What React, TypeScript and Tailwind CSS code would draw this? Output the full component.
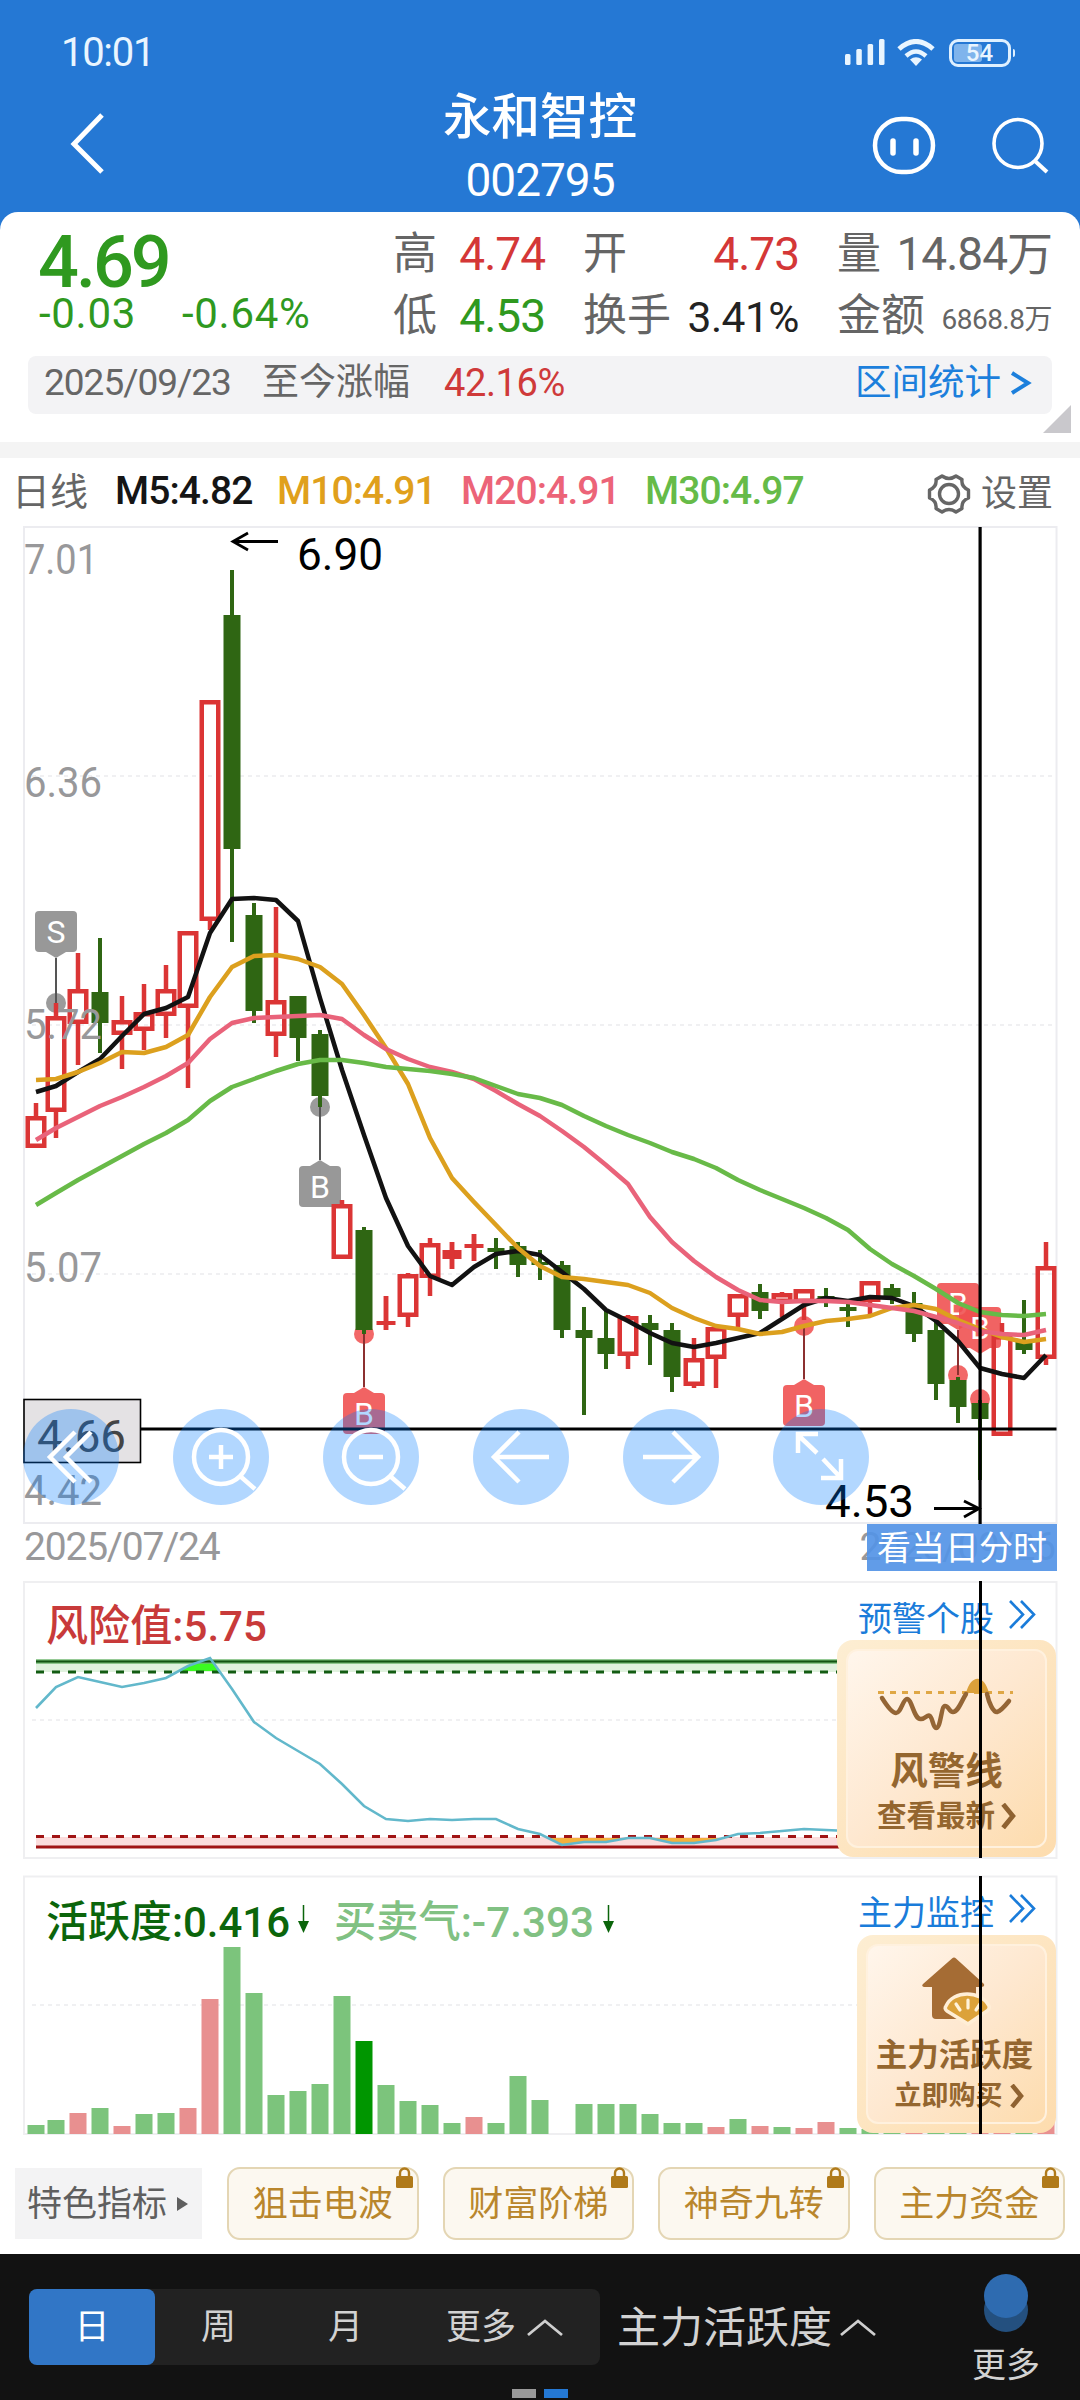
import React from "react";

type Candle = [number, number, number, number, "r" | "g"];

// high, body top, body bottom, low, direction
const CANDLES: Candle[] = [
  [1103, 1116, 1148, 1148, "r"],
  [1003, 1016, 1112, 1138, "r"],
  [953, 989, 1024, 1065, "r"],
  [938, 992, 1023, 1053, "g"],
  [996, 1020, 1035, 1069, "r"],
  [984, 1012, 1031, 1050, "r"],
  [965, 989, 1016, 1038, "r"],
  [931, 931, 1008, 1088, "r"],
  [700, 700, 921, 930, "r"],
  [570, 615, 849, 942, "g"],
  [903, 915, 1011, 1023, "g"],
  [907, 1000, 1036, 1057, "r"],
  [996, 996, 1038, 1061, "g"],
  [1030, 1034, 1096, 1107, "g"],
  [1200, 1204, 1259, 1259, "r"],
  [1227, 1230, 1330, 1334, "g"],
  [1296, 1321, 1325, 1330, "r"],
  [1273, 1274, 1317, 1327, "r"],
  [1238, 1243, 1278, 1296, "r"],
  [1242, 1250, 1259, 1269, "r"],
  [1234, 1244, 1248, 1261, "r"],
  [1238, 1248, 1252, 1269, "g"],
  [1242, 1246, 1265, 1277, "g"],
  [1250, 1262, 1265, 1280, "g"],
  [1261, 1265, 1330, 1338, "g"],
  [1307, 1330, 1338, 1415, "g"],
  [1310, 1338, 1354, 1369, "g"],
  [1315, 1316, 1356, 1369, "r"],
  [1315, 1323, 1330, 1365, "g"],
  [1323, 1330, 1377, 1392, "g"],
  [1338, 1358, 1386, 1388, "r"],
  [1327, 1327, 1359, 1388, "r"],
  [1294, 1294, 1317, 1327, "r"],
  [1284, 1292, 1311, 1319, "g"],
  [1292, 1293, 1303, 1317, "r"],
  [1289, 1289, 1303, 1320, "r"],
  [1288, 1296, 1299, 1307, "g"],
  [1303, 1307, 1311, 1327, "g"],
  [1281, 1281, 1302, 1314, "r"],
  [1284, 1288, 1297, 1304, "g"],
  [1292, 1303, 1334, 1342, "g"],
  [1320, 1330, 1384, 1400, "g"],
  [1377, 1380, 1407, 1423, "g"],
  [1400, 1403, 1419, 1480, "g"],
  [1323, 1335, 1436, 1436, "r"],
  [1300, 1340, 1350, 1354, "g"],
  [1242, 1266, 1359, 1365, "r"],
];

const MA5 = [1092, 1086, 1072, 1059, 1036, 1014, 1008, 997, 933, 899, 898, 900, 921, 998, 1070, 1135, 1198, 1246, 1276, 1285, 1267, 1254, 1251, 1255, 1272, 1289, 1310, 1321, 1333, 1343, 1347, 1343, 1338, 1333, 1319, 1305, 1298, 1301, 1297, 1298, 1306, 1321, 1341, 1368, 1374, 1378, 1355];
const MA10 = [1080, 1079, 1072, 1063, 1052, 1053, 1047, 1035, 997, 967, 956, 955, 959, 967, 984, 1015, 1048, 1084, 1138, 1178, 1202, 1225, 1248, 1266, 1277, 1279, 1282, 1285, 1293, 1308, 1318, 1326, 1329, 1334, 1332, 1326, 1321, 1319, 1316, 1308, 1305, 1309, 1320, 1329, 1337, 1342, 1339];
const MA20 = [1140, 1128, 1117, 1106, 1097, 1087, 1076, 1063, 1039, 1023, 1018, 1017, 1016, 1015, 1019, 1035, 1049, 1059, 1067, 1072, 1079, 1091, 1104, 1116, 1131, 1147, 1165, 1184, 1217, 1242, 1261, 1277, 1290, 1300, 1302, 1301, 1301, 1302, 1305, 1308, 1311, 1317, 1323, 1331, 1334, 1335, 1330];
const MA30 = [1205, 1193, 1180, 1168, 1156, 1144, 1133, 1120, 1101, 1087, 1079, 1071, 1064, 1060, 1060, 1063, 1067, 1069, 1071, 1074, 1078, 1086, 1094, 1098, 1105, 1116, 1126, 1135, 1143, 1152, 1159, 1168, 1180, 1190, 1199, 1208, 1218, 1230, 1249, 1264, 1276, 1289, 1303, 1312, 1315, 1316, 1314];

const RISK = [1708, 1687, 1677, 1682, 1687, 1683, 1678, 1666, 1658, 1689, 1722, 1738, 1751, 1764, 1784, 1806, 1819, 1821, 1819, 1820, 1819, 1819, 1829, 1834, 1845, 1842, 1842, 1838, 1838, 1843, 1843, 1840, 1834, 1833, 1831, 1829, 1830, 1831];

const BARS: [number, string][] = [
  [2125, "g"], [2120, "g"], [2113, "r"], [2108, "g"], [2126, "r"], [2114, "g"], [2113, "g"], [2108, "r"],
  [1999, "r"], [1947, "g"], [1993, "g"], [2095, "g"], [2091, "g"], [2084, "g"], [1996, "g"], [2041, "d"],
  [2085, "g"], [2101, "g"], [2105, "g"], [2123, "g"], [2117, "r"], [2123, "g"], [2076, "g"], [2100, "g"],
  [2134, "g"], [2104, "g"], [2104, "g"], [2104, "g"], [2114, "g"], [2123, "g"], [2123, "g"], [2127, "r"],
  [2119, "g"], [2126, "r"], [2127, "g"], [2128, "r"], [2122, "r"], [2128, "g"], [2129, "g"], [2129, "g"],
  [2129, "r"], [2129, "g"], [2129, "g"], [2129, "r"], [2129, "r"], [2129, "g"], [2122, "r"],
];

const BAR_FILL: Record<string, string> = { g: "#7cc47c", r: "#e89090", d: "#009600" };

const xAt = (i: number) => (i === 0 ? 36 : 34 + 22 * i);
const toPoints = (ys: number[]) => ys.map((y, i) => `${xAt(i)},${y}`).join(" ");

interface SignalProps {
  x: number;
  dotY: number;
  boxY: number;
  label: string;
  color: string;
  line: string;
}

const SIGNALS: SignalProps[] = [
  { x: 56, dotY: 1003, boxY: 911, label: "S", color: "#8a8a8a", line: "#555" },
  { x: 320, dotY: 1107, boxY: 1166, label: "B", color: "#8a8a8a", line: "#555" },
  { x: 364, dotY: 1334, boxY: 1393, label: "B", color: "#f04e4e", line: "#8c3030" },
  { x: 804, dotY: 1326, boxY: 1385, label: "B", color: "#f04e4e", line: "#8c3030" },
  { x: 958, dotY: 1375, boxY: 1283, label: "B", color: "#f04e4e", line: "#8c3030" },
  { x: 980, dotY: 1399, boxY: 1307, label: "B", color: "#f04e4e", line: "#8c3030" },
];

function Signal({ x, dotY, boxY, label, color, line }: SignalProps) {
  const above = boxY < dotY;
  const tip = above ? boxY + 47 : boxY - 6;
  const base = above ? boxY + 41 : boxY;
  return (
    <g>
      <circle cx={x} cy={dotY} r="10" fill={color} fillOpacity="0.85" />
      <line x1={x} x2={x} y1={tip} y2={dotY} stroke={line} strokeWidth="2" />
      <g opacity="0.88">
        <rect x={x - 21} y={boxY} width="42" height="41" rx="4" fill={color} />
        <path d={`M${x - 10} ${base} L${x} ${tip} L${x + 10} ${base} Z`} fill={color} />
      </g>
      <text x={x} y={boxY + 32} fontSize="32" textAnchor="middle" fill="#fff">
        {label}
      </text>
    </g>
  );
}

function PriceLabel({ x = 24, y, w = 78, size = 43, fill = "#98989a", children }: { x?: number; y: number; w?: number; size?: number; fill?: string; children: string }) {
  return (
    <text x={x} y={y} fontSize={size} fill={fill} textLength={w} lengthAdjust="spacingAndGlyphs">
      {children}
    </text>
  );
}

function KLine() {
  return (
    <svg className="block overflow-visible" width="1080" height="998" viewBox="0 526 1080 998">
      <rect x="24" y="527" width="1032.5" height="996" fill="none" stroke="#ececf0" strokeWidth="2" />
      {[776, 1025, 1274].map((y) => (
        <line key={y} x1="32" x2="1056" y1={y} y2={y} stroke="#f0f0f2" strokeWidth="2" strokeDasharray="4 4" />
      ))}

      {SIGNALS.map((s, i) => (
        <Signal key={i} {...s} />
      ))}

      {CANDLES.map(([high, top, bottom, low, dir], i) => {
        const x = xAt(i);
        if (dir === "g") {
          return (
            <g key={i} fill="#2f6613">
              <rect x={x - 2} y={high} width="4" height={low - high} />
              <rect x={x - 8.5} y={top} width="17" height={bottom - top} />
            </g>
          );
        }
        return (
          <g key={i} fill="#db3535">
            <rect x={x - 2.25} y={high} width="4.5" height={top - high} />
            <rect x={x - 2.25} y={bottom} width="4.5" height={low - bottom} />
            {bottom - top < 10 ? (
              <>
                <rect x={x - 9.5} y={top} width="19" height={bottom - top} />
                <rect x={x - 2.25} y={high} width="4.5" height={low - high} />
              </>
            ) : (
              <rect x={x - 8.25} y={top + 2.25} width="16.5" height={bottom - top - 4.5} fill="none" stroke="#db3535" strokeWidth="4.5" />
            )}
          </g>
        );
      })}

      <PriceLabel y={574} w={74}>7.01</PriceLabel>
      <PriceLabel y={797}>6.36</PriceLabel>
      <PriceLabel y={1039}>5.72</PriceLabel>
      <PriceLabel y={1282}>5.07</PriceLabel>
      <PriceLabel y={1505}>4.42</PriceLabel>

      <g fill="none" strokeWidth="4.5" strokeLinejoin="round">
        <polyline points={toPoints(MA5)} stroke="#121212" />
        <polyline points={toPoints(MA10)} stroke="#dca01e" />
        <polyline points={toPoints(MA20)} stroke="#e9637a" />
        <polyline points={toPoints(MA30)} stroke="#68ba48" />
      </g>

      {/* extremes */}
      <g fill="none" stroke="#000" strokeWidth="2.8">
        <path d="M278 541.5 H233 M248 533 L233 541.5 L248 550" />
        <path d="M934 1508.5 H979 M964 1501 L979 1508.5 L964 1517" />
      </g>
      <PriceLabel x={297} y={570} w={86} size={45} fill="#000">6.90</PriceLabel>
      <PriceLabel x={825} y={1517} w={89} size={45} fill="#000">4.53</PriceLabel>

      {/* crosshair */}
      <rect x="140" y="1427.5" width="916.5" height="3" fill="#000" />
      <rect x="978.5" y="527" width="3.2" height="997" fill="#000" />
      <rect x="24" y="1399.5" width="116.5" height="63" fill="#e4e2e4" stroke="#000" strokeWidth="1.6" />
      <PriceLabel x={37} y={1452} w={89} size={45} fill="#444">4.66</PriceLabel>
    </svg>
  );
}

const TOOL_ICONS = [
  <path key="back" d="M52 23 L27 48 L52 73 M68 23 L43 48 L68 73" />,
  <g key="in">
    <circle cx="48" cy="48" r="27" />
    <path d="M36 48 H60 M48 36 V60 M67 67 L82 80" />
  </g>,
  <g key="out">
    <circle cx="48" cy="48" r="27" />
    <path d="M36 48 H60 M67 67 L82 80" />
  </g>,
  <path key="left" d="M76 48 H22 M46 23 L21 48 L46 73" />,
  <path key="right" d="M20 48 H74 M50 23 L75 48 L50 73" />,
  <path key="full" d="M44 44 L25 26 M25 44 V25 H45 M50 50 L68 69 M48 69 H68 V50" />,
];

function ChartTools() {
  return (
    <div className="absolute left-[23px] top-[883px] flex gap-[54px]">
      {TOOL_ICONS.map((icon, i) => (
        <div key={i} className="h-24 w-24 rounded-full bg-[rgba(0,122,255,0.3)]">
          <svg width="96" height="96" viewBox="0 0 96 96" fill="none" stroke="#fff" strokeWidth="4.5">
            {icon}
          </svg>
        </div>
      ))}
    </div>
  );
}

function RiskChart() {
  const pts = toPoints(RISK);
  return (
    <svg className="block" width="1080" height="278" viewBox="0 1581 1080 278">
      <defs>
        <clipPath id="hi"><rect x="0" y="1662" width="840" height="9" /></clipPath>
        <clipPath id="lo"><rect x="0" y="1838" width="840" height="10" /></clipPath>
      </defs>
      <rect x="24" y="1582" width="1032.5" height="276" fill="none" stroke="#efeff1" strokeWidth="2" />
      <line x1="32" x2="850" y1="1720" y2="1720" stroke="#f0f0f2" strokeWidth="2" strokeDasharray="4 4" />
      <rect x="36" y="1662" width="814" height="10" fill="#e0f2de" />
      <rect x="36" y="1837" width="814" height="10" fill="#fbdcdc" />
      <polygon points={`36,1700 ${pts} 848,1700`} fill="#3bfb22" clipPath="url(#hi)" />
      <polygon points={`36,1800 ${pts} 848,1800`} fill="#f3b13c" clipPath="url(#lo)" />
      <line x1="36" x2="850" y1="1661.5" y2="1661.5" stroke="#73b873" strokeWidth="4.5" />
      <line x1="36" x2="850" y1="1661.5" y2="1661.5" stroke="#135413" strokeWidth="2" />
      <line x1="36" x2="850" y1="1672" y2="1672" stroke="#125c12" strokeWidth="3" strokeDasharray="8 8" />
      <line x1="36" x2="850" y1="1836.5" y2="1836.5" stroke="#a01414" strokeWidth="3" strokeDasharray="8 8" />
      <line x1="36" x2="850" y1="1847" y2="1847" stroke="#a01414" strokeWidth="3" />
      <polyline points={pts} fill="none" stroke="#62b8cb" strokeWidth="2.6" />
      <text x="46" y="1641" fontSize="43" fontWeight="500" fill="#c83a3a" textLength="221" lengthAdjust="spacingAndGlyphs">
        风险值:5.75
      </text>
    </svg>
  );
}

function ActivityChart() {
  return (
    <svg className="block" width="1080" height="260" viewBox="0 1875 1080 260">
      <rect x="24" y="1876.5" width="1032.5" height="257.5" fill="none" stroke="#efeff1" strokeWidth="2" />
      <line x1="32" x2="1056" y1="2005" y2="2005" stroke="#f0f0f2" strokeWidth="2" strokeDasharray="4 4" />
      {BARS.map(([top, kind], i) => (
        <rect key={i} x={xAt(i) - 8.5} y={top} width="17" height={2134 - top} fill={BAR_FILL[kind]} />
      ))}
      <text x="46" y="1937" fontSize="43" fontWeight="500" fill="#0b650b" textLength="244" lengthAdjust="spacingAndGlyphs">
        活跃度:0.416
      </text>
      <text x="334" y="1937" fontSize="43" fontWeight="500" fill="#81c183" textLength="260" lengthAdjust="spacingAndGlyphs">
        买卖气:-7.393
      </text>
      {[303.5, 608.5].map((x) => (
        <g key={x} fill="#0b650b">
          <rect x={x - 0.75} y="1905" width="1.5" height="18" />
          <path d={`M${x - 5.5} 1921 H${x + 5.5} L${x} 1933 Z`} />
        </g>
      ))}
    </svg>
  );
}

function PanelLink({ children }: { children: string }) {
  return (
    <div className="absolute left-[858px] top-[18px] flex items-center gap-[15px] text-[34px] leading-[40px] text-[#1a7cda]">
      <span>{children}</span>
      <svg width="27" height="30" viewBox="0 0 27 30" fill="none" stroke="#1a7cda" strokeWidth="2.6" className="-mt-2">
        <path d="M1 1 L14 14.5 L1 28 M12 1 L25 14.5 L12 28" />
      </svg>
    </div>
  );
}

function MoreChevron({ size }: { size: string }) {
  return (
    <svg className={size} viewBox="0 0 14 24" fill="none" stroke="#8f6231" strokeWidth="4.5">
      <path d="M2 1 L11 12 L2 23" />
    </svg>
  );
}

function StatusBar() {
  return (
    <div className="flex h-[84px] items-center justify-between pl-[61px] pr-[65px] pt-[21px] text-[#e9f5ff]">
      <span className="text-[40px] leading-none tracking-[-1.3px]">10:01</span>
      <div className="flex items-center">
        <svg width="40" height="28" viewBox="0 0 40 28" fill="#e9f5ff">
          <rect x="0" y="15" width="5.5" height="11" rx="1.5" />
          <rect x="11.3" y="10" width="5.5" height="16" rx="1.5" />
          <rect x="22.6" y="5" width="5.5" height="21" rx="1.5" />
          <rect x="34" y="0" width="5.5" height="26" rx="1.5" />
        </svg>
        <svg className="ml-3" width="38" height="28" viewBox="0 0 38 28" fill="none" stroke="#e9f5ff" strokeWidth="5">
          <path d="M2 10 Q19 -5 36 10" />
          <path d="M9 17 Q19 8 29 17" strokeWidth="4.5" />
          <path d="M13 20.5 Q19 16 25 20.5 L19 27 Z" fill="#e9f5ff" stroke="none" />
        </svg>
        <div className="relative ml-3.5 flex h-7 w-[62px] items-center justify-center rounded-[9px] border-[3px] border-[#dff0ff]">
          <div className="absolute left-0.5 top-0.5 h-[18px] w-[28px] rounded-[3px] bg-[#7fb4ec]" />
          <span className="relative text-[24px] font-medium leading-none">54</span>
        </div>
        <div className="ml-0.5 h-2 w-[2.5px] rounded-r bg-[#dff0ff]" />
      </div>
    </div>
  );
}

function NavBar() {
  return (
    <div className="flex h-[128px] text-white">
      <svg className="ml-[68px] mt-[28px] w-[372px] shrink-0" height="64" viewBox="0 0 60 64" preserveAspectRatio="xMinYMin meet" fill="none" stroke="#fff" strokeWidth="5">
        <path d="M34 3 L6 32 L34 60" />
      </svg>
      <div className="flex w-[200px] shrink-0 flex-col items-center">
        <h1 className="mt-[9px] whitespace-nowrap text-[48.5px] font-medium leading-[50px]">永和智控</h1>
        <p className="mt-[14px] text-[46px] leading-[46px] tracking-[-1px]">002795</p>
      </div>
      <svg className="mt-[28px] w-[440px] shrink-0" height="66" viewBox="0 0 440 66" fill="none" stroke="#fff">
        <g transform="translate(231 0)">
          <rect x="4" y="7" width="58" height="53" rx="26.5" strokeWidth="4.5" />
          <path d="M22 29 V41 M45 29 V41" strokeWidth="5.5" strokeLinecap="round" />
          <circle cx="147" cy="31.500" r="24" strokeWidth="3.6" />
          <path d="M164 49 L176 60" strokeWidth="4" />
        </g>
      </svg>
    </div>
  );
}

function Quote() {
  return (
    <section className="relative h-[230px]">
      <div className="flex h-[144px] pl-[38px]">
        <div className="w-[355px] pt-[15px] text-[#2f991f]">
          <div className="text-[72px] font-medium leading-[72px] tracking-[-3px]">4.69</div>
          <div className="mt-[-13px] flex gap-[46px] pl-px text-[42px] leading-[56px] tracking-[0.7px]">
            <span>-0.03</span>
            <span>-0.64%</span>
          </div>
        </div>
        <div className="grid grid-cols-[152px_38px_216px_38px_215px] grid-rows-[62px_62px] pt-[11px] text-[44px] text-[#656565]">
          <div className="flex items-center justify-between"><span>高</span><span className="text-[46px] tracking-[-1px] text-[#d43737]">4.74</span></div>
          <i />
          <div className="flex items-center justify-between"><span>开</span><span className="text-[46px] tracking-[-1px] text-[#d43737]">4.73</span></div>
          <i />
          <div className="flex items-center justify-between"><span>量</span><span className="text-[46px] tracking-[-1px]">14.84万</span></div>
          <div className="flex items-center justify-between"><span>低</span><span className="text-[46px] tracking-[-1px] text-[#2f991f]">4.53</span></div>
          <i />
          <div className="flex items-center justify-between"><span>换手</span><span className="pt-1 text-[42.5px] tracking-[-0.5px] text-[#222]">3.41%</span></div>
          <i />
          <div className="flex items-center justify-between"><span>金额</span><span className="pt-2 text-[28px] tracking-[-0.5px]">6868.8万</span></div>
        </div>
      </div>

      <div className="mx-7 flex h-[58px] items-center rounded-lg bg-[#f3f3f5] pb-1 pl-4 pr-[20px] text-[37px] text-[#666]">
        <span className="w-[218px] tracking-[-1px]">2025/09/23</span>
        <span className="w-[182px]">至今涨幅</span>
        <span className="text-[38px] tracking-[-0.4px] text-[#cf3a3a]">42.16%</span>
        <span className="ml-auto flex items-center gap-[9px] text-[36.5px] text-[#1c7fdc]">
          区间统计
          <svg width="22" height="24" viewBox="0 0 22 24" fill="none" stroke="#1c7fdc" strokeWidth="4">
            <path d="M2 2 L18 12 L2 22" />
          </svg>
        </span>
      </div>

      <svg className="absolute right-[9px] top-[193px]" width="28" height="28" viewBox="0 0 28 28">
        <path d="M28 0 V28 H0 Z" fill="#c9c8cc" />
      </svg>
    </section>
  );
}

function Averages() {
  return (
    <div className="flex h-[68px] items-center pb-px pl-[12px] pr-[27px] text-[39px] font-medium leading-none tracking-[-0.9px]">
      <span className="w-[103px] text-[38px] font-normal tracking-normal text-[#666]">日线</span>
      <span className="w-[162px] text-[#151515]">M5:4.82</span>
      <span className="w-[184px] text-[#e0a01c]">M10:4.91</span>
      <span className="w-[184px] text-[#ec6478]">M20:4.91</span>
      <span className="text-[#66bb48]">M30:4.97</span>
      <div className="ml-auto flex items-center gap-2.5 pt-1 text-[36px] font-normal tracking-normal text-[#666]">
        <svg width="44" height="42" viewBox="0 0 44 42" fill="none" stroke="#666" strokeWidth="3.4" strokeLinejoin="round">
          <path d="M15 3 Q22 8 29 3 L35 6.5 Q34 14 41.500 17 V25 Q34 28 35 35.500 L29 39 Q22 34 15 39 L9 35.500 Q10 28 2.500 25 V17 Q10 14 9 6.500 Z" />
          <circle cx="22" cy="21" r="9.5" />
        </svg>
        <span>设置</span>
      </div>
    </div>
  );
}

function GoldCard({ className, children }: { className: string; children: React.ReactNode }) {
  return (
    <div className={`absolute rounded-[16px] bg-gradient-to-br from-[#fdeed3] to-[#fddcae] p-[9px] ${className}`}>
      <div className="flex h-full flex-col items-center rounded-[12px] border-2 border-[#fff1de] bg-gradient-to-br from-[#fff6ec] via-[#fee8d0] to-[#fddcae] font-bold text-[#94662f]">
        {children}
      </div>
    </div>
  );
}

const TAGS = ["狙击电波", "财富阶梯", "神奇九转", "主力资金"];

function Tags() {
  return (
    <div className="flex h-[119px] items-start pl-[15px] pt-8 text-[35px]">
      <div className="mr-[25px] mt-px flex h-[71px] w-[187px] items-center bg-[#f3f3f4] pl-3 pt-1 text-[#5f5f5f]">
        特色指标
        <svg className="mb-1 ml-2.5" width="11" height="14" viewBox="0 0 11 14">
          <path d="M0 0 L11 7 L0 14 Z" fill="#5f5f5f" />
        </svg>
      </div>
      <div className="flex gap-[24px]">
        {TAGS.map((tag) => (
          <div key={tag} className="relative flex h-[73px] w-[191.500px] items-center justify-center rounded-[13px] border-2 border-[#e4d6b4] bg-[#fcf8f0] pt-1 text-[#b9862c]">
            {tag}
            <svg className="absolute right-[4px] top-[-2px]" width="17" height="22" viewBox="0 0 17 22">
              <path d="M4 10 V6 a4.500 4.500 0 0 1 9 0 V10" fill="none" stroke="#b07a1a" strokeWidth="2.4" />
              <rect x="0" y="9" width="17" height="12" rx="1.500" fill="#b07a1a" />
            </svg>
          </div>
        ))}
      </div>
    </div>
  );
}

function UpChevron() {
  return (
    <svg width="36" height="18" viewBox="0 0 36 18" fill="none" stroke="#cfcfcf" strokeWidth="2.8">
      <path d="M1 16 L18 2 L35 16" />
    </svg>
  );
}

function BottomBar() {
  return (
    <footer className="relative flex h-[146px] bg-[#121212] text-[35px] text-[#d2d2d2]">
      <div className="ml-[29px] mt-[35px] flex h-[76px] w-[571px] rounded-lg bg-[#222222]">
        <div className="flex w-[126px] items-center justify-center rounded-lg bg-[#3176c6] pt-0.5 text-white">日</div>
        <div className="flex w-[127px] items-center justify-center pt-0.5">周</div>
        <div className="flex w-[127px] items-center justify-center pt-0.5">月</div>
        <div className="flex w-[191px] items-center justify-center gap-[11px] pt-0.5">
          更多
          <UpChevron />
        </div>
      </div>
      <div className="ml-[17px] mt-[35px] flex h-[76px] items-center gap-2 pt-0.5 text-[43px]">
        主力活跃度
        <UpChevron />
      </div>
      <div className="ml-auto mr-[40px] flex w-[68px] flex-col items-center">
        <svg className="mt-5" width="46" height="60" viewBox="0 0 46 60">
          <circle cx="23" cy="36" r="22" fill="#24507f" />
          <circle cx="23" cy="22" r="22" fill="#2e6bb0" />
        </svg>
        <span className="mt-[9px] whitespace-nowrap text-[34px] leading-[44px]">更多</span>
      </div>
      <div className="absolute bottom-[2px] left-[512px] flex gap-2">
        <div className="h-[9px] w-6 bg-[#999]" />
        <div className="h-[9px] w-6 bg-[#2478d4]" />
      </div>
    </footer>
  );
}

export default function App() {
  return (
    <div className="h-[2400px] w-[1080px] overflow-hidden bg-[#2578d4] font-['Roboto','Noto_Sans_CJK_SC',sans-serif]">
      <header className="h-[212px]">
        <StatusBar />
        <NavBar />
      </header>

      <main className="rounded-t-[18px] bg-white">
        <Quote />
        <div className="h-4 bg-[#f4f4f4]" />
        <Averages />

        <div className="relative h-[998px]">
          <KLine />
          <ChartTools />
        </div>
        <div className="relative flex h-[57px] items-start justify-between pl-[24px] pr-[25px] text-[39px] leading-[46px] tracking-[-1.2px] text-[#98989a]">
          <span>2025/07/24</span>
          <span>2025/09/26</span>
          <div className="absolute right-[23px] top-0 flex h-[47px] w-[190px] items-center justify-center bg-[rgba(84,148,230,0.92)] text-[34px] leading-none tracking-normal text-white">
            看当日分时
          </div>
        </div>

        {/* risk line */}
        <div className="relative h-[278px]">
          <RiskChart />
          <PanelLink>预警个股</PanelLink>
          <GoldCard className="left-[837px] top-[59px] h-[217px] w-[219px]">
            <svg className="mr-[3px] mt-[23px]" width="136" height="60" viewBox="878 1674 136 60" fill="none">
              <path d="M879 1692.500 H1014" stroke="#dfa745" strokeWidth="3" strokeDasharray="6 6" />
              <path d="M967 1693 C972 1674 985 1674 990 1693 Z" fill="#dba03a" />
              <path d="M883 1698 C888 1706 893 1713 897 1713 C902 1713 904 1699 908 1699 C913 1699 915 1720 922 1719 C927 1719 928 1714 931 1716 C934 1719 934 1728 937 1728 C942 1728 942 1706 946 1706 C950 1706 950 1712 954 1712 C959 1712 962 1702 967 1694 M988 1694 C990 1703 994 1712 998 1712 C1002 1711 1006 1706 1010 1701" stroke="#946535" strokeWidth="4.500" strokeLinecap="round" />
            </svg>
            <div className="mt-[16px] text-[37.500px] leading-[42px]">风警线</div>
            <div className="mt-[5px] flex items-center gap-[6px] text-[29.500px] leading-[38px]">
              查看最新
              <MoreChevron size="h-[26px] w-[15px]" />
            </div>
          </GoldCard>
          <div className="absolute left-[978.500px] top-0 h-[277px] w-[3.200px] bg-black" />
        </div>

        {/* activity */}
        <div className="relative mt-4 h-[260px]">
          <ActivityChart />
          <PanelLink>主力监控</PanelLink>
          <GoldCard className="left-[857px] top-[60px] h-[198px] w-[199px]">
            <svg className="mt-[10px] mr-px" width="72" height="70" viewBox="921 1956 72 70">
              <path d="M953 1958.500 Q955 1956.500 957 1958.500 L985 1984 Q986 1987 982 1987 H977 V2019 H937 Q933 2019 933 2015 V1987 H925 Q922 1986 924 1984 Z" fill="#a56c34" />
              <path d="M969 2024 L948 2011 Q945 2009 947 2006 C954 1990 982 1990 990 2006 Q991 2009 988 2011 Z" fill="#dca23a" stroke="#ffeed6" strokeWidth="3.500" />
              <path d="M957 2004 L961 2010 M969 2000 V2008 M981 2004 L977 2010" stroke="#fff3dc" strokeWidth="3.200" strokeLinecap="round" />
            </svg>
            <div className="mr-1 mt-[11px] text-[31.500px] leading-[38px]">主力活跃度</div>
            <div className="ml-[5px] mt-[2px] flex items-center gap-[7px] text-[27px] leading-[38px]">
              立即购买
              <MoreChevron size="h-[24px] w-[14px]" />
            </div>
          </GoldCard>
          <div className="absolute left-[978.500px] top-px h-[258px] w-[3.200px] bg-black" />
        </div>

        <Tags />
      </main>

      <BottomBar />
    </div>
  );
}
